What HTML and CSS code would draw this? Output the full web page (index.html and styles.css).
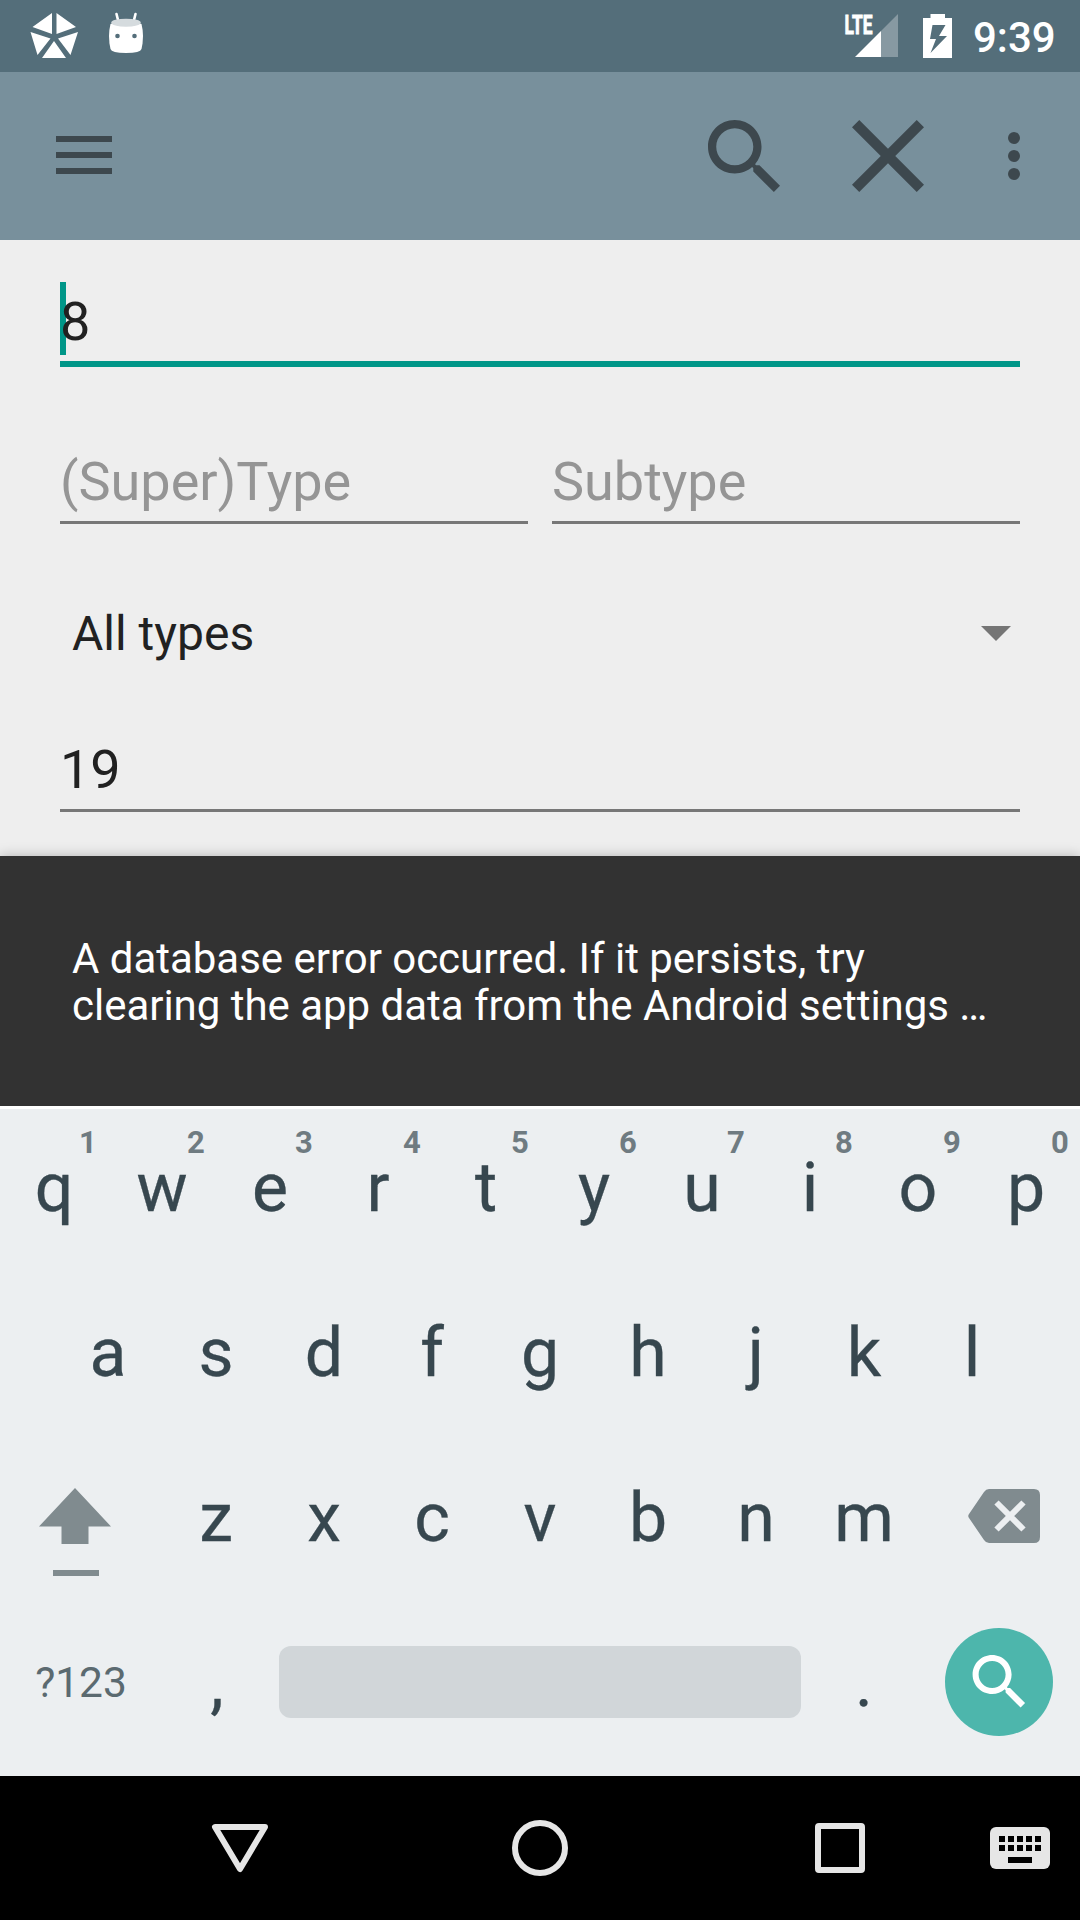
FILE: index.html
```html
<!DOCTYPE html>
<html lang="en">
<head>
<meta charset="utf-8">
<title>Search</title>
<link rel="stylesheet" href="styles.css">
</head>
<body>
<header class="status">
  <svg class="status-left" width="160" height="72" viewBox="0 0 160 72">
    <path fill="#fff" d="M52 13v21L32.500 27zM56.500 13v21L76 27zM30.500 32l20 6.500-13 16.500zM78 32l-20 6.500L70.500 55zM54 41l12 17H42z"/>
    <path stroke="#fff" stroke-width="2.600" stroke-linecap="round" d="M116.500 14l2 8M135.500 14l-2 8"/>
    <path fill="#fff" d="M110.500 24Q126 18 141.500 24Q144.500 36 141.500 49Q140.500 53 126 53Q111.500 53 110.500 49Q107.500 36 110.500 24z"/>
    <ellipse cx="126" cy="22.700" rx="14.800" ry="4" fill="#d5dbde"/>
    <circle cx="117.500" cy="36" r="2.300" fill="#546e7a"/><circle cx="134.500" cy="36" r="2.300" fill="#546e7a"/>
  </svg>
  <svg class="status-right" width="120" height="72" viewBox="840 0 120 72">
    <text class="lte" x="844.500" y="33.500" textLength="28" lengthAdjust="spacingAndGlyphs">LTE</text>
    <path fill="#fff" fill-opacity=".3" d="M898 14v43h-17V31z"/>
    <path fill="#fff" d="M881 31v26h-26z"/>
    <path fill="#fff" fill-rule="evenodd" d="M930.500 14h14.500v4h7v40h-29V18h7.500zM932.500 25l-2.500 14h6l-5.500 14L947 36h-8l6.500-11z"/>
  </svg>
  <span class="clock">9:39</span>
</header>

<nav class="appbar">
  <svg width="56" height="38" viewBox="0 0 56 38"><path d="M0 0h56v6H0zM0 16h56v6H0zM0 32h56v6H0z"/></svg>
  <div class="actions">
    <svg width="72" height="72" viewBox="3 3 17.490 17.490"><path d="M15.500 14h-.79l-.28-.27C15.410 12.590 16 11.110 16 9.500 16 5.910 13.090 3 9.500 3S3 5.910 3 9.500 5.910 16 9.500 16c1.610 0 3.090-.59 4.230-1.570l.27.28v.79l5 4.990L20.490 19l-4.990-5zm-6 0C7.010 14 5 11.990 5 9.500S7.010 5 9.500 5 14 7.010 14 9.500 11.990 14 9.500 14z"/></svg>
    <svg width="72" height="72" viewBox="5 5 14 14"><path d="M19 6.410L17.590 5 12 10.590 6.410 5 5 6.410 10.590 12 5 17.590 6.410 19 12 13.410 17.590 19 19 17.590 13.410 12z"/></svg>
    <svg class="more" width="12" height="48" viewBox="0 0 12 48"><circle cx="6" cy="6" r="6"/><circle cx="6" cy="24" r="6"/><circle cx="6" cy="42" r="6"/></svg>
  </div>
</nav>

<main class="form">
  <div class="field focused"><i class="caret"></i><span>8</span></div>
  <div class="pair">
    <div class="field hint-text">(Super)Type</div>
    <div class="field hint-text">Subtype</div>
  </div>
  <div class="spinner"><span>All types</span>
    <svg width="30" height="15" viewBox="0 0 30 15"><path d="M0 0h30L15 15z"/></svg>
  </div>
  <div class="field">19</div>
</main>

<aside class="snackbar">A database error occurred. If it persists, try<br>clearing the app data from the Android settings …</aside>

<section class="keyboard">
  <div class="row">
    <div class="key">q<sup>1</sup></div><div class="key">w<sup>2</sup></div><div class="key">e<sup>3</sup></div><div class="key">r<sup>4</sup></div><div class="key">t<sup>5</sup></div><div class="key">y<sup>6</sup></div><div class="key">u<sup>7</sup></div><div class="key">i<sup>8</sup></div><div class="key">o<sup>9</sup></div><div class="key">p<sup>0</sup></div>
  </div>
  <div class="row">
    <div class="key">a</div><div class="key">s</div><div class="key">d</div><div class="key">f</div><div class="key">g</div><div class="key">h</div><div class="key">j</div><div class="key">k</div><div class="key">l</div>
  </div>
  <div class="row">
    <svg class="special" width="162" height="165" viewBox="0 0 162 165"><path d="M75 49l36 38.500H88.500V105h-27V87.500H39zM53 131h46v6H53z"/></svg>
    <div class="key">z</div><div class="key">x</div><div class="key">c</div><div class="key">v</div><div class="key">b</div><div class="key">n</div><div class="key">m</div>
    <svg class="special" width="162" height="165" viewBox="0 0 162 165"><path d="M71 50h45q6 0 6 6v42q0 6-6 6H71q-3 0-5-3L51 79q-1.500-2 0-4L66 53q2-3 5-3z"/><path class="cross" d="M78.500 63.500l27 27M105.500 63.500l-27 27"/></svg>
  </div>
  <div class="row">
    <div class="mode">?123</div>
    <div class="key comma">,</div>
    <div class="space"></div>
    <div class="key">.</div>
    <div class="enter">
      <svg width="72" height="72" viewBox="-.2 0 24 24"><path d="M15.500 14h-.79l-.28-.27C15.410 12.590 16 11.110 16 9.500 16 5.910 13.090 3 9.500 3S3 5.910 3 9.500 5.910 16 9.500 16c1.610 0 3.090-.59 4.230-1.570l.27.28v.79l5 4.990L20.490 19l-4.990-5zm-6 0C7.010 14 5 11.990 5 9.500S7.010 5 9.500 5 14 7.010 14 9.500 11.990 14 9.500 14z"/></svg>
    </div>
  </div>
</section>

<footer class="navbar">
  <svg width="1080" height="144" viewBox="0 0 1080 144">
    <g fill="none" stroke="#e6e6e6" stroke-width="6" stroke-linejoin="round">
      <path d="M215 51h50l-25 42z"/>
      <circle cx="540" cy="72" r="25"/>
      <rect x="818" y="50" width="44" height="44" rx="1"/>
    </g>
    <rect x="990" y="51" width="60" height="42" rx="6" fill="#e6e6e6"/>
    <path d="M999 60h6v6h-6zM1008 60h6v6h-6zM1017 60h6v6h-6zM1026 60h6v6h-6zM1035 60h6v6h-6zM999 69h6v6h-6zM1008 69h6v6h-6zM1017 69h6v6h-6zM1026 69h6v6h-6zM1035 69h6v6h-6zM1008 81h24v6h-24z"/>
  </svg>
</footer>
</body>
</html>
```
FILE: styles.css
```css
* { box-sizing: border-box; }
body {
  margin: 0;
  width: 1080px;
  height: 1920px;
  overflow: hidden;
  display: flex;
  flex-direction: column;
  background: #eee;
  font-family: Roboto, "Noto Sans", sans-serif;
  color: #212121;
}
svg { display: block; flex: none; }

.status {
  height: 72px;
  flex: none;
  display: flex;
  background: #546e7a;
  color: #fff;
}
.status-right { margin-left: auto; }
.lte { font-size: 26px; font-weight: 700; fill: #fff; stroke: #fff; stroke-width: .9; }
.clock {
  width: 120px;
  padding-left: 13px;
  font-size: 42px;
  font-weight: 500;
  line-height: 75px;
}

.appbar {
  height: 168px;
  flex: none;
  display: flex;
  align-items: center;
  justify-content: space-between;
  padding: 0 60px 0 56px;
  background: #78909c;
  fill: #3d484e;
}
.appbar > svg { margin-bottom: 2px; }
.actions { display: flex; align-items: center; gap: 72px; }
.more { margin-left: 12px; }

.form {
  height: 616px;
  flex: none;
  padding: 42px 60px 0;
}
.field {
  position: relative;
  flex: 1;
  height: 82px;
  border-bottom: 3px solid #777;
  font-size: 54px;
  line-height: 79px;
}
.focused { height: 85px; border-bottom: 6px solid #009688; }
.focused span { position: relative; }
.caret {
  position: absolute;
  left: 0;
  top: 0;
  width: 6px;
  height: 73px;
  background: #009688;
}
.hint-text { color: #959595; }
.pair { display: flex; gap: 24px; margin-top: 75px; }
.spinner {
  display: flex;
  align-items: center;
  justify-content: space-between;
  height: 71px;
  margin: 74px 0 61px;
  padding: 0 9px 0 12px;
  font-size: 48px;
  line-height: 71px;
  fill: #757575;
}

.snackbar {
  position: relative;
  height: 250px;
  flex: none;
  padding: 79px 72px 0;
  background: #323232;
  box-shadow: 0 0 12px rgba(0, 0, 0, .25);
  color: #fff;
  font-size: 42px;
  line-height: 47px;
  letter-spacing: -.025px;
  white-space: nowrap;
}

.keyboard {
  position: relative;
  height: 670px;
  flex: none;
  border-top: 3px solid #fff;
  background: #eceff1;
  color: #37474f;
}
.row { display: flex; justify-content: center; height: 165px; }
.key {
  position: relative;
  width: 108px;
  text-align: center;
  font-size: 68px;
  line-height: 158px;
  -webkit-text-stroke: .3px currentColor;
}
.key sup {
  position: absolute;
  left: 68px;
  top: 14px;
  width: 40px;
  font-size: 31px;
  font-weight: 700;
  line-height: 40px;
  color: #6f7b81;
  -webkit-text-stroke: 0;
}
.comma { padding-left: 2px; }
.special { fill: #808b8f; }
.cross { fill: none; stroke: #eceff1; stroke-width: 6; }
.mode {
  width: 162px;
  text-align: center;
  font-size: 42.500px;
  line-height: 157px;
  color: #5b6a70;
}
.space {
  width: 522px;
  height: 72px;
  margin: 42px 9px 0;
  border-radius: 12px;
  background: #d1d6d9;
}
.enter {
  display: flex;
  align-items: center;
  justify-content: center;
  width: 108px;
  height: 108px;
  margin: 24px 27px 0;
  border-radius: 50%;
  background: #4db6ac;
  fill: #fff;
}

.navbar { height: 144px; flex: none; background: #000; }
```
